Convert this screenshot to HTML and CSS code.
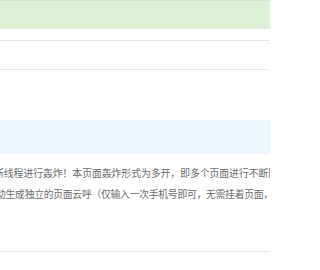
FILE: index.html
```html
<!DOCTYPE html>
<html lang="zh-CN">
<head>
<meta charset="utf-8">
<link rel="stylesheet" href="styles.css">
</head>
<body>
<div class="page">
  <div class="alert-success"></div>
  <div class="row row-first"></div>
  <div class="row row-second"></div>
  <div class="panel-heading"></div>
  <div class="panel-body">
    <p class="desc">
      <span class="line line-one">断线程进行轰炸！本页面轰炸形式为多开，即多个页面进行不断隔</span>
      <span class="line line-two">动生成独立的页面云呼（仅输入一次手机号即可，无需挂着页面，</span>
    </p>
  </div>
</div>
</body>
</html>
```
FILE: styles.css
```css
html, body {
  margin: 0;
  padding: 0;
  background: #ffffff;
  overflow: hidden;
}
.page {
  width: 270px;
  height: 270px;
  overflow: hidden;
  font-family: "Noto Sans CJK SC", "Noto Sans", sans-serif;
}
.alert-success {
  height: 28px;
  background: #dff0d8;
  border-top: 1px solid #d9e3d4;
}
.row {
  border-bottom: 1px solid #e6e6e6;
}
.row-first {
  height: 11px;
}
.row-second {
  height: 28px;
}
.panel-heading {
  margin-top: 50px;
  height: 34px;
  background: #eff5fc;
}
.panel-body {
  padding-top: 9px;
  height: 88px;
  border-bottom: 1px solid #e6e6e6;
  overflow: hidden;
}
.desc {
  margin: 0;
  font-size: 9.8px;
  line-height: 21px;
  color: #6b6b6b;
  white-space: nowrap;
}
.line {
  display: block;
}
.line-one {
  margin-left: -6px;
}
.line-two {
  margin-left: -4px;
  letter-spacing: -0.25px;
}
```
